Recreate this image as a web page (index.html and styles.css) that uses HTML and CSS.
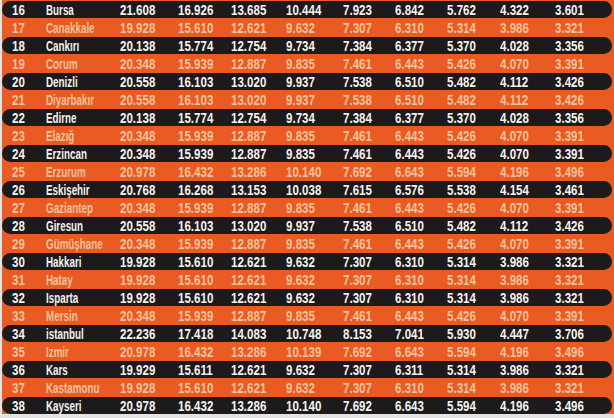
FILE: index.html
```html
<!DOCTYPE html>
<html lang="tr">
<head>
<meta charset="utf-8">
<title>Tablo</title>
<link rel="stylesheet" href="styles.css">
</head>
<body>
<div class="table">
  <div class="row dark"><span>16</span><span class="name"><b>Bursa</b></span><span>21.608</span><span>16.926</span><span>13.685</span><span>10.444</span><span>7.923</span><span>6.842</span><span>5.762</span><span>4.322</span><span>3.601</span></div>
  <div class="row light"><span>17</span><span class="name"><b>Canakkale</b></span><span>19.928</span><span>15.610</span><span>12.621</span><span>9.632</span><span>7.307</span><span>6.310</span><span>5.314</span><span>3.986</span><span>3.321</span></div>
  <div class="row dark"><span>18</span><span class="name"><b>Cankırı</b></span><span>20.138</span><span>15.774</span><span>12.754</span><span>9.734</span><span>7.384</span><span>6.377</span><span>5.370</span><span>4.028</span><span>3.356</span></div>
  <div class="row light"><span>19</span><span class="name"><b>Corum</b></span><span>20.348</span><span>15.939</span><span>12.887</span><span>9.835</span><span>7.461</span><span>6.443</span><span>5.426</span><span>4.070</span><span>3.391</span></div>
  <div class="row dark"><span>20</span><span class="name"><b>Denizli</b></span><span>20.558</span><span>16.103</span><span>13.020</span><span>9.937</span><span>7.538</span><span>6.510</span><span>5.482</span><span>4.112</span><span>3.426</span></div>
  <div class="row light"><span>21</span><span class="name"><b>Diyarbakır</b></span><span>20.558</span><span>16.103</span><span>13.020</span><span>9.937</span><span>7.538</span><span>6.510</span><span>5.482</span><span>4.112</span><span>3.426</span></div>
  <div class="row dark"><span>22</span><span class="name"><b>Edirne</b></span><span>20.138</span><span>15.774</span><span>12.754</span><span>9.734</span><span>7.384</span><span>6.377</span><span>5.370</span><span>4.028</span><span>3.356</span></div>
  <div class="row light"><span>23</span><span class="name"><b>Elazığ</b></span><span>20.348</span><span>15.939</span><span>12.887</span><span>9.835</span><span>7.461</span><span>6.443</span><span>5.426</span><span>4.070</span><span>3.391</span></div>
  <div class="row dark"><span>24</span><span class="name"><b>Erzincan</b></span><span>20.348</span><span>15.939</span><span>12.887</span><span>9.835</span><span>7.461</span><span>6.443</span><span>5.426</span><span>4.070</span><span>3.391</span></div>
  <div class="row light"><span>25</span><span class="name"><b>Erzurum</b></span><span>20.978</span><span>16.432</span><span>13.286</span><span>10.140</span><span>7.692</span><span>6.643</span><span>5.594</span><span>4.196</span><span>3.496</span></div>
  <div class="row dark"><span>26</span><span class="name"><b>Eskişehir</b></span><span>20.768</span><span>16.268</span><span>13.153</span><span>10.038</span><span>7.615</span><span>6.576</span><span>5.538</span><span>4.154</span><span>3.461</span></div>
  <div class="row light"><span>27</span><span class="name"><b>Gaziantep</b></span><span>20.348</span><span>15.939</span><span>12.887</span><span>9.835</span><span>7.461</span><span>6.443</span><span>5.426</span><span>4.070</span><span>3.391</span></div>
  <div class="row dark"><span>28</span><span class="name"><b>Giresun</b></span><span>20.558</span><span>16.103</span><span>13.020</span><span>9.937</span><span>7.538</span><span>6.510</span><span>5.482</span><span>4.112</span><span>3.426</span></div>
  <div class="row light"><span>29</span><span class="name"><b>Gümüşhane</b></span><span>20.348</span><span>15.939</span><span>12.887</span><span>9.835</span><span>7.461</span><span>6.443</span><span>5.426</span><span>4.070</span><span>3.391</span></div>
  <div class="row dark"><span>30</span><span class="name"><b>Hakkari</b></span><span>19.928</span><span>15.610</span><span>12.621</span><span>9.632</span><span>7.307</span><span>6.310</span><span>5.314</span><span>3.986</span><span>3.321</span></div>
  <div class="row light"><span>31</span><span class="name"><b>Hatay</b></span><span>19.928</span><span>15.610</span><span>12.621</span><span>9.632</span><span>7.307</span><span>6.310</span><span>5.314</span><span>3.986</span><span>3.321</span></div>
  <div class="row dark"><span>32</span><span class="name"><b>Isparta</b></span><span>19.928</span><span>15.610</span><span>12.621</span><span>9.632</span><span>7.307</span><span>6.310</span><span>5.314</span><span>3.986</span><span>3.321</span></div>
  <div class="row light"><span>33</span><span class="name"><b>Mersin</b></span><span>20.348</span><span>15.939</span><span>12.887</span><span>9.835</span><span>7.461</span><span>6.443</span><span>5.426</span><span>4.070</span><span>3.391</span></div>
  <div class="row dark"><span>34</span><span class="name"><b>istanbul</b></span><span>22.236</span><span>17.418</span><span>14.083</span><span>10.748</span><span>8.153</span><span>7.041</span><span>5.930</span><span>4.447</span><span>3.706</span></div>
  <div class="row light"><span>35</span><span class="name"><b>Izmir</b></span><span>20.978</span><span>16.432</span><span>13.286</span><span>10.139</span><span>7.692</span><span>6.643</span><span>5.594</span><span>4.196</span><span>3.496</span></div>
  <div class="row dark"><span>36</span><span class="name"><b>Kars</b></span><span>19.929</span><span>15.611</span><span>12.621</span><span>9.632</span><span>7.307</span><span>6.311</span><span>5.314</span><span>3.986</span><span>3.321</span></div>
  <div class="row light"><span>37</span><span class="name"><b>Kastamonu</b></span><span>19.928</span><span>15.610</span><span>12.621</span><span>9.632</span><span>7.307</span><span>6.310</span><span>5.314</span><span>3.986</span><span>3.321</span></div>
  <div class="row dark"><span>38</span><span class="name"><b>Kayseri</b></span><span>20.978</span><span>16.432</span><span>13.286</span><span>10.140</span><span>7.692</span><span>6.643</span><span>5.594</span><span>4.196</span><span>3.496</span></div>
</div>
</body>
</html>
```

FILE: styles.css
```css
html, body {
  margin: 0;
  padding: 0;
}
body {
  background: #e4e3e3;
  width: 614px;
  height: 418px;
  overflow: hidden;
  font-family: "Liberation Sans", Arial, sans-serif;
  font-weight: bold;
  font-size: 15px;
}
.table {
  margin-left: 2px;
  background: #ea5a23;
  padding-top: 1px;
  display: flex;
  flex-direction: column;
}
.row {
  display: grid;
  grid-template-columns: 34px 74px 58px 53px 55px 57px 52px 52px 53px 55px 1fr;
  align-items: center;
  padding-left: 10px;
  white-space: nowrap;
  line-height: 17px;
}
.row > span {
  display: block;
  transform: scaleX(0.77);
  transform-origin: left center;
}
.row.dark {
  height: 17px;
  background: #1c1a1a;
  color: #f4f2f0;
  border-radius: 9px;
  margin-right: 2px;
}
.row.light {
  height: 19px;
  color: #f6c29c;
}
.name b {
  display: inline-block;
  transform: scaleX(0.85);
  transform-origin: left center;
}
```
